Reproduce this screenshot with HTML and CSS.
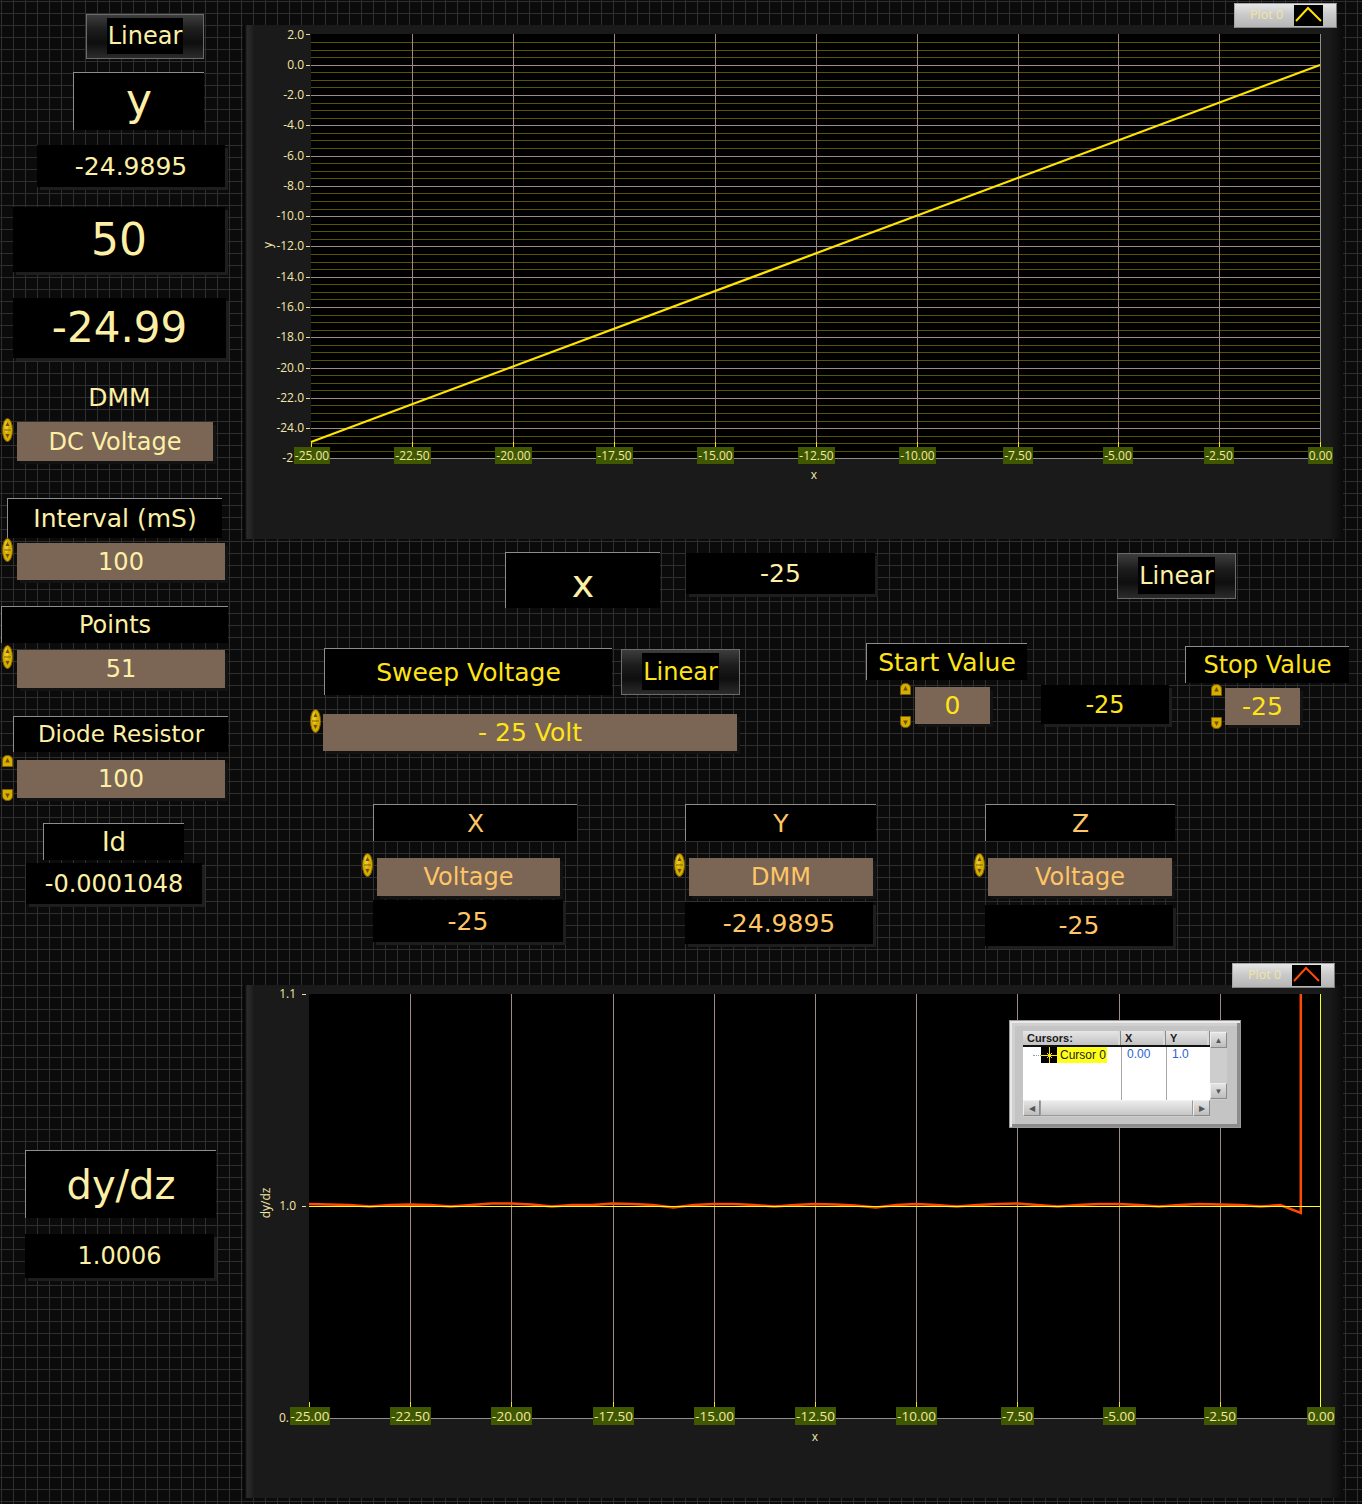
FILE: index.html
```html
<!DOCTYPE html>
<html>
<head>
<meta charset="utf-8">
<title>Diode Sweep</title>
<link rel="stylesheet" href="styles.css">
</head>
<body>
<div class="panel">
  <div class="left">
    <div class="btn l-linear"><span class="cream">Linear</span></div>
    <div class="lbl l-y cream">y</div>
    <div class="ind l-yval cream">-24.9895</div>
    <div class="ind l-50 cream">50</div>
    <div class="ind l-2499 cream">-24.99</div>
    <div class="plain l-dmm cream">DMM</div>
    <div class="ctl l-dc">
      <svg class="spin" width="11" height="24" viewBox="0 0 11 24"><ellipse cx="5.5" cy="12" rx="5" ry="11.5" fill="#d6ac00" stroke="#7d6000"/><ellipse cx="4.3" cy="9" rx="2" ry="6" fill="#f4d84a" opacity=".6"/><path d="M5.5 4L3.5 8H7.5ZM5.5 20L3.5 16H7.5Z" fill="#6b5200"/><path d="M2 12H9" stroke="#7d6000"/></svg>
      <div class="ring r-dc cream">DC Voltage</div>
    </div>
    <div class="lbl l-int cream">Interval (mS)</div>
    <div class="ctl l-intv">
      <svg class="spin" width="11" height="24" viewBox="0 0 11 24"><ellipse cx="5.5" cy="12" rx="5" ry="11.5" fill="#d6ac00" stroke="#7d6000"/><ellipse cx="4.3" cy="9" rx="2" ry="6" fill="#f4d84a" opacity=".6"/><path d="M5.5 4L3.5 8H7.5ZM5.5 20L3.5 16H7.5Z" fill="#6b5200"/><path d="M2 12H9" stroke="#7d6000"/></svg>
      <div class="ring r-wide r-int cream">100</div>
    </div>
    <div class="lbl l-pts cream">Points</div>
    <div class="ctl l-ptsv">
      <svg class="spin" width="11" height="24" viewBox="0 0 11 24"><ellipse cx="5.5" cy="12" rx="5" ry="11.5" fill="#d6ac00" stroke="#7d6000"/><ellipse cx="4.3" cy="9" rx="2" ry="6" fill="#f4d84a" opacity=".6"/><path d="M5.5 4L3.5 8H7.5ZM5.5 20L3.5 16H7.5Z" fill="#6b5200"/><path d="M2 12H9" stroke="#7d6000"/></svg>
      <div class="ring r-wide r-pts cream">51</div>
    </div>
    <div class="lbl l-diode cream">Diode Resistor</div>
    <div class="ctl l-diodev">
      <div class="split s46">
        <svg width="11" height="12" viewBox="0 0 11 12"><path d="M0.5 11.5V5.5Q0.5 0.5 5.5 0.5Q10.5 0.5 10.5 5.5V11.5Z" fill="#d8ae00" stroke="#7d6000"/><path d="M5.5 3L3.2 7.5H7.8Z" fill="#6b5200"/></svg>
        <svg width="11" height="12" viewBox="0 0 11 12"><path d="M0.5 0.5V6.5Q0.5 11.5 5.5 11.5Q10.5 11.5 10.5 6.5V0.5Z" fill="#d8ae00" stroke="#7d6000"/><path d="M5.5 9L3.2 4.5H7.8Z" fill="#6b5200"/></svg>
      </div>
      <div class="ring r-wide r-diode cream">100</div>
    </div>
    <div class="lbl l-id cream">Id</div>
    <div class="ind l-idv cream">-0.0001048</div>
    <div class="lbl l-dydz cream">dy/dz</div>
    <div class="ind l-dyv cream">1.0006</div>
  </div>

  <div class="right">
    <div class="chart chart1">
      <svg class="plot" width="1100" height="514" viewBox="0 0 1100 514" font-family="Open Sans, sans-serif" font-size="12">
        <rect x="68" y="9" width="1010" height="424" fill="#000"/>
        <path shape-rendering="crispEdges" fill="none" stroke="#5b5300" d="M68 17.5H1078M68 25.5H1078M68 32.5H1078M68 47.5H1078M68 55.5H1078M68 62.5H1078M68 78.5H1078M68 85.5H1078M68 93.5H1078M68 108.5H1078M68 115.5H1078M68 123.5H1078M68 138.5H1078M68 146.5H1078M68 153.5H1078M68 168.5H1078M68 176.5H1078M68 184.5H1078M68 199.5H1078M68 206.5H1078M68 214.5H1078M68 229.5H1078M68 237.5H1078M68 244.5H1078M68 259.5H1078M68 267.5H1078M68 274.5H1078M68 290.5H1078M68 297.5H1078M68 305.5H1078M68 320.5H1078M68 327.5H1078M68 335.5H1078M68 350.5H1078M68 358.5H1078M68 365.5H1078M68 380.5H1078M68 388.5H1078M68 396.5H1078M68 411.5H1078M68 418.5H1078M68 426.5H1078"/>
        <path shape-rendering="crispEdges" fill="none" stroke="#9f8985" d="M68 40.5H1077M68 70.5H1077M68 100.5H1077M68 131.5H1077M68 161.5H1077M68 191.5H1077M68 221.5H1077M68 252.5H1077M68 282.5H1077M68 312.5H1077M68 343.5H1077M68 373.5H1077M68 403.5H1077M169.5 9V417M270.5 9V417M371.5 9V417M472.5 9V417M573.5 9V417M674.5 9V417M775.5 9V417M875.5 9V417M976.5 9V417"/>
        <path shape-rendering="crispEdges" fill="none" stroke="#8e8e8e" d="M1077.5 9V433M68 433.5H1078"/>
        <path shape-rendering="crispEdges" fill="none" stroke="#ffe000" d="M68.5 417V422M169.5 417V422M270.5 417V422M371.5 417V422M472.5 417V422M573.5 417V422M674.5 417V422M775.5 417V422M875.5 417V422M976.5 417V422M1077.5 417V422"/>
        <line x1="68" y1="417" x2="1077" y2="40" stroke="#ffe400" stroke-width="2.2"/>
        <path shape-rendering="crispEdges" fill="none" stroke="#e9dda0" d="M63 9.5H67M63 40.5H67M63 70.5H67M63 100.5H67M63 131.5H67M63 161.5H67M63 191.5H67M63 221.5H67M63 252.5H67M63 282.5H67M63 312.5H67M63 343.5H67M63 373.5H67M63 403.5H67"/>
        <g fill="#f3e7a7" text-anchor="end">
          <text x="61" y="14">2.0</text>
          <text x="61" y="44">0.0</text>
          <text x="61" y="74">-2.0</text>
          <text x="61" y="104">-4.0</text>
          <text x="61" y="135">-6.0</text>
          <text x="61" y="165">-8.0</text>
          <text x="61" y="195">-10.0</text>
          <text x="61" y="225">-12.0</text>
          <text x="61" y="256">-14.0</text>
          <text x="61" y="286">-16.0</text>
          <text x="61" y="316">-18.0</text>
          <text x="61" y="347">-20.0</text>
          <text x="61" y="377">-22.0</text>
          <text x="61" y="407">-24.0</text>
          <text x="50" y="437">-2</text>
        </g>
        <g fill="#3f5800">
          <rect x="51" y="422" width="36" height="17"/>
          <rect x="151" y="422" width="37" height="17"/>
          <rect x="252" y="422" width="37" height="17"/>
          <rect x="353" y="422" width="37" height="17"/>
          <rect x="454" y="422" width="37" height="17"/>
          <rect x="555" y="422" width="37" height="17"/>
          <rect x="656" y="422" width="37" height="17"/>
          <rect x="760" y="422" width="30" height="17"/>
          <rect x="860" y="422" width="30" height="17"/>
          <rect x="961" y="422" width="30" height="17"/>
          <rect x="1065" y="422" width="25" height="17"/>
        </g>
        <g fill="#f3e7a7" text-anchor="middle">
          <text x="69" y="435">-25.00</text>
          <text x="169.5" y="435">-22.50</text>
          <text x="270.5" y="435">-20.00</text>
          <text x="371.5" y="435">-17.50</text>
          <text x="472.5" y="435">-15.00</text>
          <text x="573.5" y="435">-12.50</text>
          <text x="674.5" y="435">-10.00</text>
          <text x="775" y="435">-7.50</text>
          <text x="875" y="435">-5.00</text>
          <text x="976" y="435">-2.50</text>
          <text x="1077.5" y="435">0.00</text>
          <text x="571" y="454">x</text>
          <text transform="translate(29,220) rotate(-90)">y</text>
        </g>
      </svg>
      <div class="plotleg leg1">
        <span class="pl-txt">Plot 0</span>
        <svg class="pl-ico" width="29" height="21" viewBox="0 0 29 21"><rect width="29" height="21" fill="#000"/><path d="M2 16L14 3L27 16" fill="none" stroke="#ffe400" stroke-width="2"/></svg>
      </div>
    </div>

    <div class="mid">
      <div class="rowA">
        <div class="lbl m-x cream">x</div>
        <div class="ind m-xv cream">-25</div>
        <div class="btn m-lin"><span class="cream">Linear</span></div>
      </div>
      <div class="rowB">
        <div class="sweep">
          <div class="sweep-top">
            <div class="lbl m-sweep yel">Sweep Voltage</div>
            <div class="btn m-lin2"><span class="yel">Linear</span></div>
          </div>
          <div class="ctl m-volt">
            <svg class="spin" width="11" height="24" viewBox="0 0 11 24"><ellipse cx="5.5" cy="12" rx="5" ry="11.5" fill="#d6ac00" stroke="#7d6000"/><ellipse cx="4.3" cy="9" rx="2" ry="6" fill="#f4d84a" opacity=".6"/><path d="M5.5 4L3.5 8H7.5ZM5.5 20L3.5 16H7.5Z" fill="#6b5200"/><path d="M2 12H9" stroke="#7d6000"/></svg>
            <div class="ring r-volt yel">- 25 Volt</div>
          </div>
        </div>
        <div class="grp m-start">
          <div class="lbl m-startl yel">Start Value</div>
          <div class="ctl m-startv">
            <div class="split s45">
              <svg width="11" height="12" viewBox="0 0 11 12"><path d="M0.5 11.5V5.5Q0.5 0.5 5.5 0.5Q10.5 0.5 10.5 5.5V11.5Z" fill="#d8ae00" stroke="#7d6000"/><path d="M5.5 3L3.2 7.5H7.8Z" fill="#6b5200"/></svg>
              <svg width="11" height="12" viewBox="0 0 11 12"><path d="M0.5 0.5V6.5Q0.5 11.5 5.5 11.5Q10.5 11.5 10.5 6.5V0.5Z" fill="#d8ae00" stroke="#7d6000"/><path d="M5.5 9L3.2 4.5H7.8Z" fill="#6b5200"/></svg>
            </div>
            <div class="ring r-num r-start yel">0</div>
          </div>
        </div>
        <div class="ind m-midv yel">-25</div>
        <div class="grp m-stop">
          <div class="lbl m-stopl yel">Stop Value</div>
          <div class="ctl m-stopv">
            <div class="split s45">
              <svg width="11" height="12" viewBox="0 0 11 12"><path d="M0.5 11.5V5.5Q0.5 0.5 5.5 0.5Q10.5 0.5 10.5 5.5V11.5Z" fill="#d8ae00" stroke="#7d6000"/><path d="M5.5 3L3.2 7.5H7.8Z" fill="#6b5200"/></svg>
              <svg width="11" height="12" viewBox="0 0 11 12"><path d="M0.5 0.5V6.5Q0.5 11.5 5.5 11.5Q10.5 11.5 10.5 6.5V0.5Z" fill="#d8ae00" stroke="#7d6000"/><path d="M5.5 9L3.2 4.5H7.8Z" fill="#6b5200"/></svg>
            </div>
            <div class="ring r-num r-stop yel">-25</div>
          </div>
        </div>
      </div>
      <div class="rowC">
        <div class="grp g-x">
          <div class="lbl gl gl-x org">X</div>
          <div class="ctl gc">
            <svg class="spin" width="11" height="24" viewBox="0 0 11 24"><ellipse cx="5.5" cy="12" rx="5" ry="11.5" fill="#d6ac00" stroke="#7d6000"/><ellipse cx="4.3" cy="9" rx="2" ry="6" fill="#f4d84a" opacity=".6"/><path d="M5.5 4L3.5 8H7.5ZM5.5 20L3.5 16H7.5Z" fill="#6b5200"/><path d="M2 12H9" stroke="#7d6000"/></svg>
            <div class="ring gr gr-x org">Voltage</div>
          </div>
          <div class="ind gi gi-x org">-25</div>
        </div>
        <div class="grp g-y">
          <div class="lbl gl gl-y org">Y</div>
          <div class="ctl gc">
            <svg class="spin" width="11" height="24" viewBox="0 0 11 24"><ellipse cx="5.5" cy="12" rx="5" ry="11.5" fill="#d6ac00" stroke="#7d6000"/><ellipse cx="4.3" cy="9" rx="2" ry="6" fill="#f4d84a" opacity=".6"/><path d="M5.5 4L3.5 8H7.5ZM5.5 20L3.5 16H7.5Z" fill="#6b5200"/><path d="M2 12H9" stroke="#7d6000"/></svg>
            <div class="ring gr gr-y org">DMM</div>
          </div>
          <div class="ind gi gi-y org">-24.9895</div>
        </div>
        <div class="grp g-z">
          <div class="lbl gl gl-z org">Z</div>
          <div class="ctl gc">
            <svg class="spin" width="11" height="24" viewBox="0 0 11 24"><ellipse cx="5.5" cy="12" rx="5" ry="11.5" fill="#d6ac00" stroke="#7d6000"/><ellipse cx="4.3" cy="9" rx="2" ry="6" fill="#f4d84a" opacity=".6"/><path d="M5.5 4L3.5 8H7.5ZM5.5 20L3.5 16H7.5Z" fill="#6b5200"/><path d="M2 12H9" stroke="#7d6000"/></svg>
            <div class="ring gr gr-z org">Voltage</div>
          </div>
          <div class="ind gi gi-z org">-25</div>
        </div>
      </div>
    </div>

    <div class="chart chart2">
      <svg class="plot" width="1100" height="513" viewBox="0 0 1100 513" font-family="Open Sans, sans-serif" font-size="12">
        <rect x="66" y="9" width="1012" height="424" fill="#000"/>
        <path shape-rendering="crispEdges" fill="none" stroke="#9f8985" d="M167.5 9V417M268.5 9V417M370.5 9V417M471.5 9V417M572.5 9V417M673.5 9V417M774.5 9V417M876.5 9V417M977.5 9V417"/>
        <path shape-rendering="crispEdges" fill="none" stroke="#8e8e8e" d="M66 433.5H1078"/>
        <path shape-rendering="crispEdges" fill="none" stroke="#ffe000" d="M66.5 417V422M167.5 417V422M268.5 417V422M370.5 417V422M471.5 417V422M572.5 417V422M673.5 417V422M774.5 417V422M876.5 417V422M977.5 417V422M1077.5 417V422"/>
        <polyline fill="none" stroke="#ff4a00" stroke-width="2.5" points="66,219 86.2,219.5 106.5,220 126.7,221.5 147,220 167.2,219.5 187.4,220 207.7,221.5 227.9,220 248.2,218.5 268.4,218.5 288.6,219.5 308.9,221.5 329.1,220 349.4,220 369.6,218.5 389.8,219 410.1,220 430.3,222.5 450.6,220 470.8,219 491,219 511.3,220 531.5,221.5 551.8,220 572,219 592.2,219.5 612.5,220.5 632.7,222.5 653,220 673.2,219 693.4,220 713.7,221.5 733.9,220 754.2,219 774.4,218.5 794.6,220 814.9,221.5 835.1,220 855.4,219 875.6,219 895.8,220 916.1,221.5 936.3,220 956.6,219 976.8,219.5 997,220 1017.3,221.5 1037.5,220 1057.8,228 1057.8,9"/>
        <path shape-rendering="crispEdges" fill="none" stroke="#ffff10" d="M66 221.5H1078M1077.5 9V433"/>
        <path shape-rendering="crispEdges" fill="none" stroke="#e9dda0" d="M59 9.5H63M59 221.5H63M59 433.5H63"/>
        <g fill="#f3e7a7" text-anchor="end">
          <text x="53" y="13">1.1</text>
          <text x="53" y="225">1.0</text>
          <text x="46" y="437">0.</text>
        </g>
        <g fill="#3f5800">
          <rect x="47" y="422" width="40" height="18"/>
          <rect x="147" y="422" width="41" height="18"/>
          <rect x="248" y="422" width="41" height="18"/>
          <rect x="350" y="422" width="41" height="18"/>
          <rect x="451" y="422" width="41" height="18"/>
          <rect x="552" y="422" width="41" height="18"/>
          <rect x="653" y="422" width="41" height="18"/>
          <rect x="758" y="422" width="33" height="18"/>
          <rect x="860" y="422" width="33" height="18"/>
          <rect x="961" y="422" width="33" height="18"/>
          <rect x="1064" y="422" width="28" height="18"/>
        </g>
        <g fill="#f3e7a7" text-anchor="middle" font-size="13.5">
          <text x="67" y="436">-25.00</text>
          <text x="167.5" y="436">-22.50</text>
          <text x="268.5" y="436">-20.00</text>
          <text x="370.5" y="436">-17.50</text>
          <text x="471.5" y="436">-15.00</text>
          <text x="572.5" y="436">-12.50</text>
          <text x="673.5" y="436">-10.00</text>
          <text x="774.5" y="436">-7.50</text>
          <text x="876.5" y="436">-5.00</text>
          <text x="977.5" y="436">-2.50</text>
          <text x="1078" y="436">0.00</text>
        </g>
        <g fill="#f3e7a7" text-anchor="middle">
          <text x="572" y="456">x</text>
          <text transform="translate(27,218) rotate(-90)">dy/dz</text>
        </g>
      </svg>
      <div class="plotleg leg2">
        <span class="pl-txt">Plot 0</span>
        <svg class="pl-ico" width="29" height="21" viewBox="0 0 29 21"><rect width="29" height="21" fill="#000"/><path d="M2 16L14 3L27 16" fill="none" stroke="#ff4a00" stroke-width="2"/></svg>
      </div>
      <div class="curs">
        <div class="cgrid">
          <div class="clist">
            <div class="chead">
              <span class="cc c1">Cursors:</span><span class="cc c2">X</span><span class="cc c3">Y</span>
            </div>
            <div class="cbody">
              <div class="crow">
                <span class="cc c1"><i class="dots"></i><svg class="cicon" width="16" height="16" viewBox="0 0 16 16"><rect width="16" height="16" fill="#000"/><path d="M0 8.5H16M8.5 0V16" stroke="#ffe400"/><path d="M6 6L11 11M11 6L6 11" stroke="#ffe400"/></svg><b class="cname">Cursor 0</b></span><span class="cc c2 cnum">0.00</span><span class="cc c3 cnum">1.0</span>
              </div>
            </div>
          </div>
          <div class="vscroll"><span class="sbtn">&#9650;</span><span class="sbtn">&#9660;</span></div>
          <div class="hscroll"><span class="sbtn">&#9664;</span><span class="thumb"></span><span class="sbtn">&#9654;</span></div>
          <div class="corner"></div>
        </div>
      </div>
    </div>
  </div>
</div>
</body>
</html>
```

FILE: styles.css
```css
* { box-sizing: border-box; }
html, body { margin: 0; padding: 0; }
body {
  width: 1362px;
  height: 1504px;
  overflow: hidden;
  background-color: #0b0b0b;
  background-image:
    linear-gradient(90deg, #2f2f2f 1px, transparent 1px),
    linear-gradient(180deg, #2f2f2f 1px, transparent 1px);
  background-size: 12px 12px;
  background-position: 1px 1px;
  font-family: "DejaVu Sans", sans-serif;
  font-size: 24px;
}
.panel { display: grid; grid-template-columns: 243px 1119px; height: 1504px; }
.left, .right { display: flex; flex-direction: column; align-items: flex-start; }

.cream { color: #fdf0a6; }
.yel { color: #ffe417; }
.org { color: #ffc566; }

.lbl, .ind, .ring, .plain {
  display: flex; align-items: center; justify-content: center;
  line-height: 1; white-space: nowrap;
}
.lbl { background: #000; border-top: 1px solid #8d8d8d; border-left: 1px solid #8d8d8d; }
.ind { background: #000; box-shadow: 3px 3px 0 #1e1e1e; }
.ring { background: #7b6555; box-shadow: 3px 3px 0 #131313; }
.btn {
  border: 1px solid #6b6b6b;
  background: linear-gradient(180deg, #3d3d3d 0%, #1c1c1c 35%, #0e0e0e 65%, #2b2b2b 100%);
  padding: 3px 20px 4px;
}
.btn span { display: flex; height: 100%; background: #000; align-items: center; justify-content: center; line-height: 1; }
.ctl { display: flex; align-items: flex-start; }
.spin { display: block; flex: none; }
.split { display: flex; flex-direction: column; justify-content: space-between; width: 11px; flex: none; }
.split svg { display: block; }
.s46 { height: 46px; }
.s45 { height: 45px; }

/* left column */
.l-linear { margin: 14px 0 0 86px; width: 118px; height: 45px; }
.l-y { margin: 13px 0 0 73px; width: 131px; height: 58px; font-size: 44px; padding-bottom: 4px; }
.l-yval { margin: 15px 0 0 37px; width: 188px; height: 42px; font-size: 25px; }
.l-50 { margin: 20px 0 0 13px; width: 212px; height: 65px; font-size: 44px; }
.l-2499 { margin: 26px 0 0 13px; width: 213px; height: 60px; font-size: 42px; }
.l-dmm { margin: 22px 0 0 13px; width: 213px; height: 34px; font-size: 25px; }
.l-dc { margin: 4px 0 0 2px; }
.r-dc { margin: 4px 0 0 4px; width: 196px; height: 39px; font-size: 24px; }
.l-int { margin: 37px 0 0 7px; width: 215px; height: 40px; font-size: 25px; }
.l-intv { margin: 0 0 0 2px; }
.r-wide { margin-left: 4px; width: 208px; font-size: 24px; }
.r-int { margin-top: 5px; height: 37px; }
.l-pts { margin: 26px 0 0 1px; width: 227px; height: 37px; }
.l-ptsv { margin: 2px 0 0 2px; }
.r-pts { margin-top: 5px; height: 38px; }
.l-diode { margin: 28px 0 0 13px; width: 215px; height: 36px; font-size: 23px; }
.l-diodev { margin: 3px 0 0 2px; }
.r-diode { margin-top: 5px; height: 38px; }
.l-id { margin: 22px 0 0 43px; width: 141px; height: 37px; font-size: 26px; }
.l-idv { margin: 3px 0 0 26px; width: 176px; height: 41px; font-size: 24px; }
.l-dydz { margin: 246px 0 0 25px; width: 191px; height: 68px; font-size: 40px; }
.l-dyv { margin: 16px 0 0 25px; width: 189px; height: 44px; font-size: 24px; }

/* charts */
.chart {
  position: relative;
  width: 1100px;
  background: linear-gradient(90deg, #070707 0, #070707 2px, #2b2b2b 4px, #242424 8px, #1a1a1a 11px, #1a1a1a 1086px, #121212 1094px, #0a0a0a 1100px);
}
.chart1 { margin-top: 25px; height: 514px; }
.chart2 { height: 513px; }
.plot { display: block; }

.plotleg {
  position: absolute;
  top: -22px;
  width: 103px;
  height: 25px;
  display: flex;
  align-items: center;
  background: linear-gradient(180deg, #e6e6e6 0%, #cacaca 45%, #b6b6b6 100%);
  border: 1px solid #a8a8a8;
  border-right-color: #7a7a7a;
  border-bottom-color: #868686;
}
.leg1 { left: 991px; }
.leg2 { left: 989px; }
.pl-txt { font-family: "Open Sans", sans-serif; font-size: 12.5px; color: #f1e5a5; margin-left: 15px; width: 44px; line-height: 1; }
.pl-ico { display: block; flex: none; }

/* middle controls */
.mid { height: 446px; width: 1119px; display: flex; flex-direction: column; align-items: flex-start; }
.rowA, .rowB, .rowC { display: flex; align-items: flex-start; }
.rowA { margin-top: 13px; }
.m-x { margin-left: 262px; width: 155px; height: 56px; font-size: 38px; padding-top: 6px; }
.m-xv { margin: 1px 0 0 26px; width: 189px; height: 41px; font-size: 25px; }
.m-lin { margin: 1px 0 0 242px; width: 119px; height: 46px; }

.rowB { margin-top: 35px; }
.sweep { margin-left: 67px; display: flex; flex-direction: column; align-items: flex-start; }
.sweep-top { display: flex; align-items: flex-start; }
.m-sweep { margin: 5px 0 0 14px; width: 288px; height: 47px; font-size: 25px; }
.m-lin2 { margin: 6px 0 0 9px; width: 119px; height: 46px; }
.m-volt { margin-top: 14px; }
.r-volt { margin: 5px 0 0 2px; width: 414px; height: 37px; font-size: 25px; }
.grp { display: flex; flex-direction: column; align-items: flex-start; }
.m-start { margin-left: 126px; }
.m-startl { width: 161px; height: 37px; font-size: 25px; }
.m-startv { margin: 3px 0 0 34px; }
.r-num { margin-top: 4px; width: 75px; height: 37px; font-size: 25px; }
.r-start { margin-left: 4px; }
.m-midv { margin: 42px 0 0 14px; width: 128px; height: 39px; font-size: 24px; }
.m-stop { margin-left: 16px; }
.m-stopl { margin-top: 3px; width: 164px; height: 37px; font-size: 24px; }
.m-stopv { margin: 1px 0 0 26px; }
.r-stop { margin-left: 3px; }

.rowC { margin-top: 53px; }
.g-x { margin-left: 119px; }
.g-y { margin-left: 97px; }
.g-z { margin-left: 98px; }
.gl { margin-left: 11px; height: 37px; font-size: 25px; }
.gl-x { width: 204px; }
.gl-y { width: 191px; }
.gl-z { width: 190px; }
.gc { margin-top: 12px; }
.gr { margin-top: 5px; height: 38px; font-size: 24px; }
.gr-x { margin-left: 4px; width: 183px; }
.gr-y { margin-left: 4px; width: 184px; }
.gr-z { margin-left: 3px; width: 184px; }
.gi { margin-left: 11px; font-size: 25px; }
.gi-x { margin-top: 4px; width: 190px; height: 42px; }
.gi-y { margin-top: 6px; width: 188px; height: 42px; }
.gi-z { margin-top: 9px; width: 188px; height: 41px; }

/* cursor legend */
.curs {
  position: absolute;
  left: 766px;
  top: 35px;
  width: 232px;
  height: 108px;
  padding: 10px 13px;
  background: #c4c4c4;
  border: 1px solid #9a9a9a;
  box-shadow: inset 2px 2px 0 #e9e9e9, inset -3px -3px 0 #8c8c8c, inset 5px 5px 0 #cfcfcf;
  font-family: "Liberation Sans", sans-serif;
}
.cgrid { display: grid; grid-template-columns: 187px 17px; grid-template-rows: 69px 17px; }
.clist { background: #fff; display: flex; flex-direction: column; }
.chead { display: flex; height: 16px; border-bottom: 2px solid #111; background: linear-gradient(180deg, #e6e6e6, #c2c2c2); }
.cc { display: flex; align-items: center; height: 100%; font-size: 11px; line-height: 1; }
.chead .cc { font-weight: bold; color: #1a1a1a; padding-left: 4px; border-right: 1px solid #8a8a8a; box-shadow: inset -2px 0 0 #dadada; }
.c1 { width: 98px; }
.c2 { width: 45px; }
.c3 { width: 44px; }
.cbody { flex: 1; display: flex; flex-direction: column; background: linear-gradient(90deg, #fff 98px, #a8a8a8 98px, #a8a8a8 99px, #fff 99px, #fff 143px, #a8a8a8 143px, #a8a8a8 144px, #fff 144px); }
.crow { display: flex; height: 16px; }
.crow .c1 { padding-left: 10px; }
.dots { display: block; width: 8px; height: 1px; border-top: 1px dotted #9a9a9a; }
.cicon { display: block; flex: none; }
.cname { font-weight: normal; font-size: 12px; background: #ffff1a; color: #222; height: 16px; display: flex; align-items: center; padding: 0 1px 0 3px; }
.cnum { color: #2a63d0; font-size: 12px; padding-left: 6px; align-items: flex-start; padding-top: 1px; }
.vscroll { display: flex; flex-direction: column; justify-content: space-between; background: #cdcdcd; padding: 1px 0; }
.hscroll { display: flex; background: #cdcdcd; padding: 0 0 1px 0; }
.corner { background: #c4c4c4; }
.sbtn {
  display: flex; align-items: center; justify-content: center;
  width: 17px; height: 16px; flex: none;
  font-size: 8px; color: #555;
  background: linear-gradient(180deg, #e4e4e4, #bdbdbd);
  border: 1px solid #8a8a8a; border-top-color: #efefef; border-left-color: #efefef;
}
.thumb { flex: 1; background: linear-gradient(180deg, #ececec, #c6c6c6); border: 1px solid #9a9a9a; border-top-color: #f3f3f3; }
```
